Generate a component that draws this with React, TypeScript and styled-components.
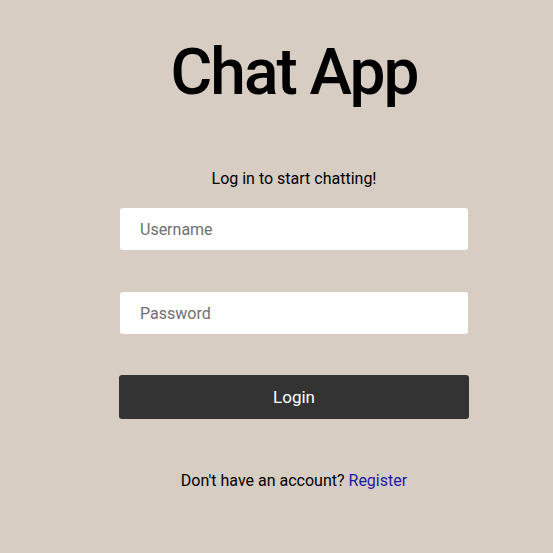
import styled, { createGlobalStyle } from 'styled-components'

const GlobalStyle = createGlobalStyle`
  html, body {
    margin: 0;
    padding: 0;
    background: #d7cdc3;
    font-family: Roboto, "Liberation Sans", sans-serif;
  }
`

export default function App() {
  return (
    <>
      <GlobalStyle />
      <Page>
        <Title>Chat App</Title>
        <Form onSubmit={e => e.preventDefault()}>
          <Subtitle>Log in to start chatting!</Subtitle>
          <Input type="text" placeholder="Username" />
          <Input type="password" placeholder="Password" />
          <Button type="submit">Login</Button>
        </Form>
        <Footer>
          Don't have an account? <Link href="#">Register</Link>
        </Footer>
      </Page>
    </>
  )
}

const Page = styled.div`
  min-height: 553px;
  box-sizing: border-box;
  padding: 31px 0 0 35px;
  display: flex;
  flex-direction: column;
  align-items: center;
`
const Title = styled.h1`
  margin: 0;
  font-size: 64px;
  font-weight: 500;
  letter-spacing: -2px;
  color: #000;
  line-height: 1.3;
`
const Form = styled.form`
  width: 350px;
  margin-top: 55px;
  display: flex;
  flex-direction: column;
  align-items: center;
`
const Subtitle = styled.p`
  margin: 0 0 20px;
  font-size: 16px;
  color: #000;
`
const Input = styled.input`
  width: 348px;
  height: 42px;
  box-sizing: border-box;
  border: none;
  border-radius: 3px;
  background: #fff;
  padding: 0 20px;
  font-family: inherit;
  font-size: 16px;
  margin-bottom: 42px;
  outline: none;
  &::placeholder {
    color: #6f6f6f;
  }
`
const Button = styled.button`
  width: 350px;
  height: 44px;
  margin-top: -1px;
  border: none;
  border-radius: 3px;
  background: #333333;
  color: #fff;
  font-family: inherit;
  font-size: 17px;
  cursor: pointer;
`
const Footer = styled.p`
  margin: 52px 0 0;
  font-size: 16px;
  color: #000;
`
const Link = styled.a`
  color: #1c1c9e;
  text-decoration: none;
`
